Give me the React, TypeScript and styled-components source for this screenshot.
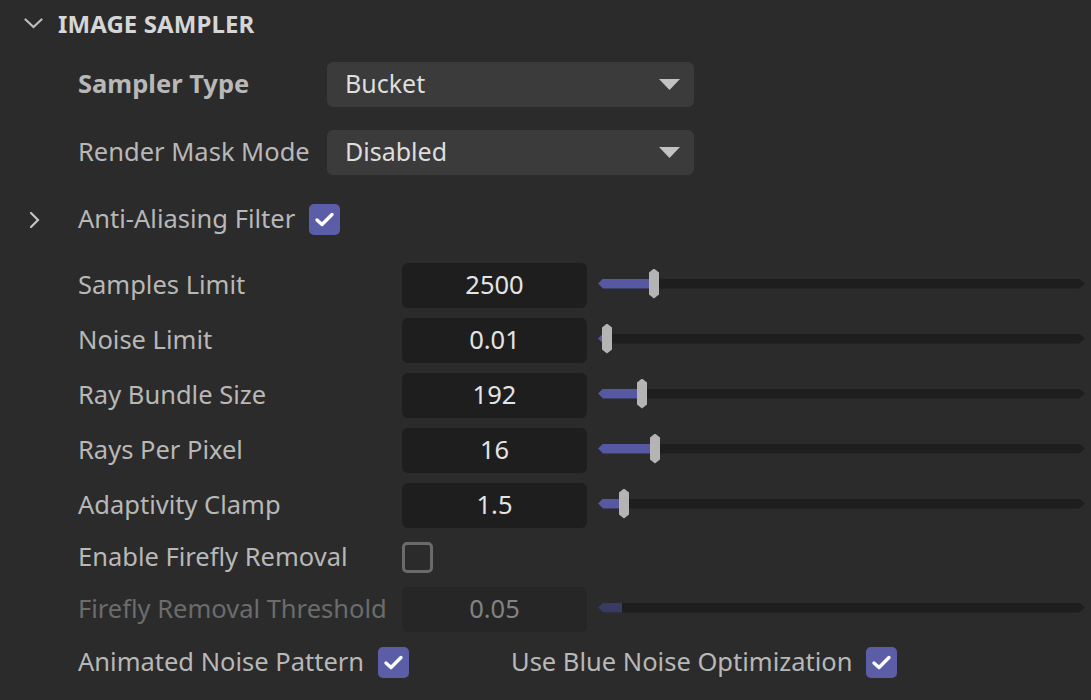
import React from "react";
import styled, { createGlobalStyle } from "styled-components";

const GlobalStyle = createGlobalStyle`
  html, body {
    margin: 0;
    padding: 0;
    background: #2b2b2b;
  }
  body {
    font-family: "Noto Sans", "Open Sans", sans-serif;
    -webkit-font-smoothing: antialiased;
  }
`;

const Panel = styled.div`
  width: 1091px;
  height: 700px;
  background: #2b2b2b;
  overflow: hidden;
  display: flex;
  flex-direction: column;
`;

const Header = styled.div`
  height: 50px;
  display: flex;
  align-items: center;
  padding-left: 24px;
  gap: 15px;
`;

const Title = styled.div`
  font-size: 24px;
  font-weight: 700;
  color: #d6d6d6;
  letter-spacing: 0.1px;
  margin-top: -3px;
`;

const Row = styled.div<{ $h: number; $indent?: number }>`
  height: ${(p) => p.$h}px;
  display: flex;
  align-items: center;
  padding-left: ${(p) => p.$indent ?? 78}px;
  padding-right: 6px;
  box-sizing: border-box;
`;

const Label = styled.div<{ $w?: number; $bold?: boolean; $disabled?: boolean }>`
  ${(p) => (p.$w ? `width: ${p.$w}px; flex: none;` : "")}
  font-size: 25.5px;
  line-height: 32px;
  margin-top: -3px;
  font-weight: ${(p) => (p.$bold ? 700 : 400)};
  color: ${(p) => (p.$disabled ? "#6c6c6c" : "#b8b8b8")};
  white-space: nowrap;
`;

const Dropdown = styled.div`
  width: 367px;
  height: 45px;
  box-sizing: border-box;
  background: #3b3b3b;
  border-radius: 6px;
  display: flex;
  align-items: center;
  justify-content: space-between;
  padding: 0 14px 0 18px;
  font-size: 25px;
  color: #dedede;
  & > span {
    margin-top: -3px;
  }
`;

const Caret = styled.svg`
  width: 21px;
  height: 11px;
  flex: none;
`;

const Check = styled.div<{ $checked: boolean }>`
  width: 31px;
  height: 31px;
  box-sizing: border-box;
  border-radius: 5px;
  flex: none;
  display: flex;
  align-items: center;
  justify-content: center;
  background: ${(p) => (p.$checked ? "#5b5ea7" : "transparent")};
  border: ${(p) => (p.$checked ? "none" : "3px solid #6a6a6a")};
  margin-left: ${(p) => (p.$checked ? 14 : 0)}px;
`;

const ExpandIcon = styled.svg`
  width: 20px;
  height: 20px;
  flex: none;
  margin-right: 33px;
`;

const Field = styled.div<{ $disabled?: boolean }>`
  width: 185px;
  height: 45px;
  flex: none;
  border-radius: 6px;
  background: ${(p) => (p.$disabled ? "#262626" : "#1e1e1e")};
  display: flex;
  align-items: center;
  justify-content: center;
  font-size: 25.5px;
  color: ${(p) => (p.$disabled ? "#838383" : "#e4e4e4")};
  & > span {
    margin-top: -3px;
  }
`;

const TrackWrap = styled.div`
  flex: 1;
  margin-left: 11px;
  height: 30px;
  position: relative;
  display: flex;
  align-items: center;
  margin-top: -4px;
`;

const Track = styled.div`
  position: relative;
  flex: 1;
  height: 10px;
  background: #1e1e1e;
  clip-path: polygon(5px 0, calc(100% - 6px) 0, 100% 50%, calc(100% - 6px) 100%, 5px 100%, 0 50%);
`;

const Fill = styled.div<{ $disabled?: boolean }>`
  position: absolute;
  left: 0;
  top: 0;
  bottom: 0;
  background: ${(p) => (p.$disabled ? "#3a3b63" : "#5659a2")};
`;

const Thumb = styled.div`
  position: absolute;
  top: 0;
  width: 10px;
  height: 30px;
  background: #b4b4b4;
  clip-path: polygon(0 4px, 50% 0, 100% 4px, 100% 26px, 50% 100%, 0 26px);
`;

const Group = styled.div<{ $w?: number }>`
  display: flex;
  align-items: center;
  ${(p) => (p.$w ? `width: ${p.$w}px;` : "")}
`;

const Spacer = styled.div<{ $h: number }>`
  height: ${(p) => p.$h}px;
  flex: none;
`;

const CheckMark = () => (
  <svg width="21" height="17" viewBox="0 0 21 17">
    <path d="M3 9 L8 13.5 L18 3.5" fill="none" stroke="#fff" strokeWidth="3.4" strokeLinecap="round" strokeLinejoin="round" />
  </svg>
);

const Checkbox = ({ checked }: { checked: boolean }) => (
  <Check $checked={checked}>{checked && <CheckMark />}</Check>
);

const DropCaret = () => (
  <Caret viewBox="0 0 21 11">
    <path d="M0 0 H21 L10.5 11 Z" fill="#c2c2c2" />
  </Caret>
);

type SliderProps = { label: string; value: string; thumb?: number; fill: number; disabled?: boolean };

const SliderRow = ({ label, value, thumb, fill, disabled }: SliderProps) => (
  <Row $h={55}>
    <Label $w={324} $disabled={disabled}>{label}</Label>
    <Field $disabled={disabled}><span>{value}</span></Field>
    <TrackWrap>
      <Track>
        <Fill $disabled={disabled} style={{ width: fill }} />
      </Track>
      {thumb !== undefined && <Thumb style={{ left: thumb }} />}
    </TrackWrap>
  </Row>
);

export default function App() {
  return (
    <Panel>
      <GlobalStyle />
      <Header>
        <svg width="19" height="11" viewBox="0 0 19 11" style={{ marginTop: -4 }}>
          <path d="M1.5 1.5 L9.5 9 L17.5 1.5" fill="none" stroke="#bdbdbd" strokeWidth="2.2" strokeLinecap="round" />
        </svg>
        <Title>IMAGE SAMPLER</Title>
      </Header>
      <Row $h={68}>
        <Label $w={249} $bold>Sampler Type</Label>
        <Dropdown>
          <span>Bucket</span>
          <DropCaret />
        </Dropdown>
      </Row>
      <Row $h={68}>
        <Label $w={249}>Render Mask Mode</Label>
        <Dropdown>
          <span>Disabled</span>
          <DropCaret />
        </Dropdown>
      </Row>
      <Row $h={67} $indent={25}>
        <ExpandIcon viewBox="0 0 20 20">
          <path d="M6 3 L13 10 L6 17" fill="none" stroke="#c4c4c4" strokeWidth="2.2" strokeLinecap="round" />
        </ExpandIcon>
        <Label>Anti-Aliasing Filter</Label>
        <Checkbox checked />
      </Row>
      <Spacer $h={5} />
      <SliderRow label="Samples Limit" value="2500" thumb={51} fill={56} />
      <SliderRow label="Noise Limit" value="0.01" thumb={4} fill={8} />
      <SliderRow label="Ray Bundle Size" value="192" thumb={39} fill={44} />
      <SliderRow label="Rays Per Pixel" value="16" thumb={52} fill={57} />
      <SliderRow label="Adaptivity Clamp" value="1.5" thumb={21} fill={26} />
      <Row $h={49}>
        <Label $w={324}>Enable Firefly Removal</Label>
        <Checkbox checked={false} />
      </Row>
      <SliderRow label="Firefly Removal Threshold" value="0.05" fill={24} disabled />
      <Row $h={51}>
        <Group $w={433}>
          <Label>Animated Noise Pattern</Label>
          <Checkbox checked />
        </Group>
        <Group>
          <Label>Use Blue Noise Optimization</Label>
          <Checkbox checked />
        </Group>
      </Row>
    </Panel>
  );
}
